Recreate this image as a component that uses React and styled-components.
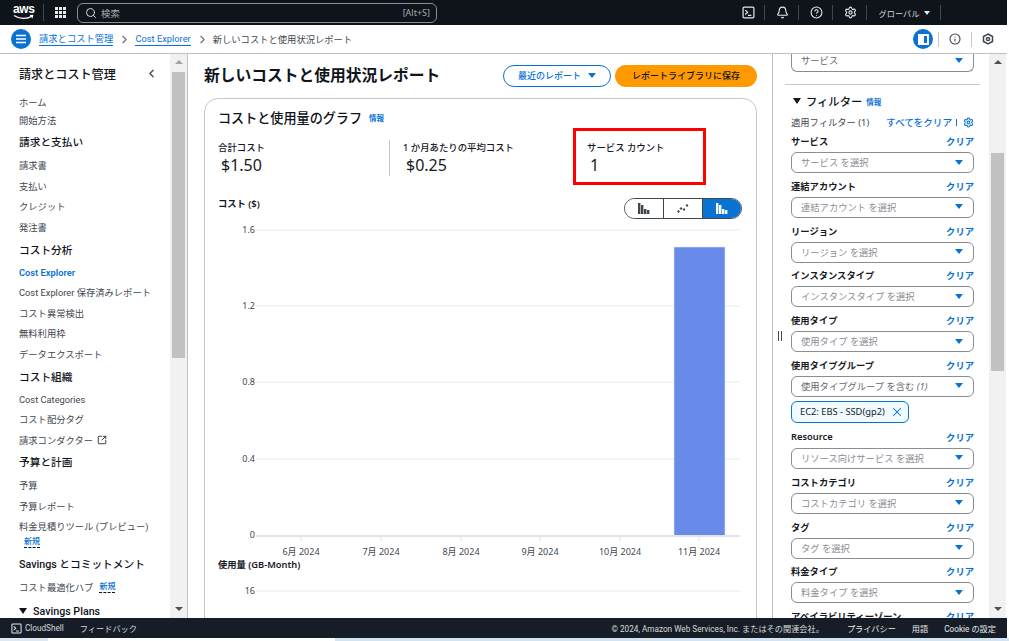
import React from 'react';
import styled, { createGlobalStyle } from 'styled-components';
import { Search, Bell, CircleHelp, Settings, Info, X, SquareArrowOutUpRight, ChevronLeft, ChevronRight } from 'lucide-react';

const narrowFont = 'Roboto, "Noto Sans CJK JP", sans-serif';

const GlobalStyle = createGlobalStyle`
    html, body {
        margin: 0;
        padding: 0;
        overflow: hidden;
        background: #fff;
    }
    * {
        box-sizing: border-box;
    }
    body {
        font-family: "Noto Sans", "Noto Sans CJK JP", "Liberation Sans", sans-serif;
        color: #16191f;
    }
`;

const Page = styled.div`
    width: 1009px;
    height: 641px;
    display: flex;
    flex-direction: column;
    overflow: hidden;
`;

const TopBar = styled.div`
    width: 1007px;
    height: 25px;
    flex: none;
    background: #0f141a;
    display: flex;
    align-items: center;
    color: #fff;
    padding-left: 13px;
`;

const AwsLogo = styled.div`
    width: 21px;
    height: 19px;
    position: relative;
    font-family: "Liberation Sans", sans-serif;
    font-size: 12px;
    font-weight: bold;
    line-height: 13px;
    letter-spacing: -0.4px;
    color: #fff;
`;

const Smile = styled.svg`
    position: absolute;
    left: 0;
    top: 11px;
`;

const LogoDivider = styled.div`
    width: 1px;
    height: 17px;
    background: #414750;
    margin: 0 11px 0 9px;
`;

const GridIcon = styled.svg`
    flex: none;
    margin-right: 11px;
`;

const SearchBox = styled.div`
    width: 360px;
    height: 20px;
    border: 1px solid #8c8f94;
    border-radius: 6px;
    display: flex;
    align-items: center;
    gap: 4px;
    padding: 0 6px 0 7px;
    font-size: 9.4px;
    color: #a7abb1;
`;

const Hint = styled.span`
    margin-left: auto;
    font-size: 9px;
`;

const TopRight = styled.div`
    margin-left: auto;
    display: flex;
    align-items: center;
    padding-right: 66px;
`;

const TopItem = styled.div`
    height: 15px;
    width: ${(p) => p.$width || 34}px;
    border-right: 1px solid #414750;
    padding-left: 2px;
    display: flex;
    align-items: center;
    justify-content: center;
    gap: 5px;
    font-size: 8.2px;
    color: #d5dbdb;
`;

const SmallCaret = styled.span`
    width: 0;
    height: 0;
    border-left: 3px solid transparent;
    border-right: 3px solid transparent;
    border-top: 4px solid #e8eaec;
`;

const CrumbBar = styled.div`
    width: 1007px;
    height: 29px;
    flex: none;
    background: #fff;
    border-bottom: 1px solid #bfc0c2;
    display: flex;
    align-items: center;
    padding-left: 11px;
    font-family: ${narrowFont};
    font-size: 9.3px;
`;

const MenuButton = styled.div`
    width: 20px;
    height: 20px;
    border-radius: 50%;
    background: #0972d3;
    flex: none;
    margin-right: ${(p) => p.$mr}px;
    display: flex;
    align-items: center;
    justify-content: center;
`;

const CrumbLink = styled.span`
    color: #0972d3;
    border-bottom: 1px solid #0972d3;
    line-height: 12px;
`;

const CrumbSep = styled.span`
    display: flex;
    color: #687078;
    margin: 0 4px 0 5px;
`;

const CrumbText = styled.span`
    color: #414750;
`;

const CrumbTools = styled.div`
    margin-left: auto;
    display: flex;
    align-items: center;
    padding-right: 3px;
`;

const ToolItem = styled.div`
    width: 33px;
    height: 15px;
    display: flex;
    align-items: center;
    justify-content: center;
    color: #414750;
    border-left: 1px solid #c6c6cd;
`;

const Body = styled.div`
    flex: 1;
    min-height: 0;
    width: 1007px;
    display: flex;
    overflow: hidden;
`;

const Side = styled.nav`
    width: 170px;
    flex: none;
    padding: 11px 0 0 19px;
    overflow: hidden;
    font-family: ${narrowFont};
    font-size: 9.3px;
`;

const SideTitle = styled.div`
    display: flex;
    align-items: center;
    justify-content: space-between;
    height: 18px;
    padding: 0 12px 2px 0;
    font-size: 12.1px;
    font-weight: 500;
    color: #0f141a;
    margin-bottom: 10px;
`;

const NavGroup = styled.div`
    height: ${(p) => p.$h || 22}px;
    display: flex;
    align-items: center;
    padding-bottom: 1px;
    font-size: 10.7px;
    font-weight: 500;
    color: #0f141a;
    white-space: nowrap;
    gap: 5px;
`;

const NavItem = styled.div`
    height: ${(p) => p.$h || 20.6}px;
    display: flex;
    align-items: center;
    gap: 4px;
    white-space: nowrap;
    color: ${(p) => (p.$active ? '#0972d3' : '#414750')};
    font-weight: ${(p) => (p.$active ? 600 : 400)};
`;

const NewTag = styled.span`
    color: #0972d3;
    font-size: 8px;
    font-weight: 500;
    line-height: 11px;
    border-bottom: 1px dashed #0f141a;
    margin-left: ${(p) => p.$indent || 0}px;
    margin-bottom: ${(p) => p.$lift || 0}px;
`;

const Scrollbar = styled.div`
    width: 17px;
    flex: none;
    background: #f1f1f1;
    display: flex;
    flex-direction: column;
    align-items: center;
    padding: 6px 0 7px;
`;

const ArrowUp = styled.span`
    flex: none;
    width: 0;
    height: 0;
    border-left: 4px solid transparent;
    border-right: 4px solid transparent;
    border-bottom: 4px solid ${(p) => p.$color || '#a3a3a3'};
`;

const ArrowDown = styled.span`
    flex: none;
    width: 0;
    height: 0;
    margin-top: auto;
    border-left: 4px solid transparent;
    border-right: 4px solid transparent;
    border-top: 4px solid #505050;
`;

const Thumb = styled.div`
    width: 13px;
    height: ${(p) => p.$h}px;
    margin-top: ${(p) => p.$top}px;
    background: #c1c1c1;
    flex: none;
`;

const Main = styled.main`
    width: 586px;
    flex: none;
    border-left: 1px solid #bfc0c2;
    border-right: 1px solid #bfc0c2;
    padding: 9px 15px 0 16px;
    overflow: hidden;
`;

const Header = styled.div`
    display: flex;
    align-items: center;
    height: 25px;
    margin-bottom: 10px;
`;

const PageTitle = styled.h1`
    margin: 0 auto 2px 0;
    font-size: 15.75px;
    font-weight: 600;
    color: #0f141a;
`;

const OutlineButton = styled.div`
    width: 108px;
    height: 22px;
    border: 1px solid #0972d3;
    border-radius: 11px;
    display: flex;
    align-items: center;
    justify-content: center;
    gap: 7px;
    color: #0972d3;
    font-size: 9px;
    font-weight: 500;
    margin-right: 4px;
`;

const PrimaryButton = styled.div`
    width: 142px;
    height: 22px;
    border-radius: 11px;
    background: #ff9900;
    display: flex;
    align-items: center;
    justify-content: center;
    color: #0f141a;
    font-size: 9px;
    font-weight: 500;
`;

const Card = styled.section`
    position: relative;
    width: 553px;
    height: 560px;
    border: 1px solid #c6c6cd;
    border-radius: 14px;
    padding: 9px 13px 0;
`;

const CardTitle = styled.div`
    display: flex;
    align-items: center;
    gap: 7px;
    height: 18px;
    font-size: 13.1px;
    font-weight: 500;
    color: #0f141a;
    margin-bottom: 14px;
`;

const InfoLink = styled.span`
    color: #0972d3;
    font-size: 7.5px;
    font-weight: 600;
`;

const Metrics = styled.div`
    display: grid;
    grid-template-columns: 171px 184px 1fr;
    height: 36px;
    margin-bottom: 22px;
`;

const Metric = styled.div`
    padding-left: ${(p) => (p.$first ? 0 : 13)}px;
    border-left: ${(p) => (p.$first ? 'none' : '1px solid #c6c6cd')};
`;

const MetricLabel = styled.div`
    font-size: 9.4px;
    font-weight: 500;
    line-height: 16px;
    color: #16191f;
`;

const MetricValue = styled.div`
    font-size: 16px;
    line-height: 19px;
    color: #16191f;
    padding-left: 3px;
`;

const Highlight = styled.div`
    position: absolute;
    left: 368px;
    top: 29px;
    width: 133px;
    height: 57px;
    border: 3px solid #ff0000;
`;

const ChartHead = styled.div`
    display: flex;
    justify-content: space-between;
    height: 26px;
`;

const ChartLabel = styled.div`
    font-size: 9.3px;
    font-weight: 600;
    line-height: 12px;
    color: #16191f;
`;

const Segments = styled.div`
    display: flex;
    width: 118px;
    height: 21px;
    border: 1px solid #414750;
    border-radius: 11px;
    overflow: hidden;
    margin-right: 1px;
`;

const Segment = styled.div`
    flex: 1;
    display: flex;
    align-items: center;
    justify-content: center;
    background: ${(p) => (p.$on ? '#0972d3' : '#fff')};
    border-left: ${(p) => (p.$first ? 'none' : '1px solid #414750')};
`;

const Chart = styled.svg`
    display: block;
    font-family: "Noto Sans", "Noto Sans CJK JP", sans-serif;
    font-size: 9px;
`;

const Splitter = styled.div`
    width: 13px;
    flex: none;
    display: flex;
    justify-content: center;
    gap: 2px;
    align-items: center;
    margin-right: -1px;
`;

const SplitBar = styled.span`
    width: 1px;
    height: 10px;
    background: #414750;
`;

const Panel = styled.aside`
    width: 204px;
    flex: none;
    overflow: hidden;
    padding-left: 6px;
`;

const FieldsWrap = styled.div`
    width: 183px;
`;

const TopSelect = styled.div`
    width: 183px;
    height: 18px;
    border: 1px solid #8c8c94;
    border-top: none;
    border-radius: 0 0 6px 6px;
    display: flex;
    align-items: center;
    justify-content: space-between;
    padding: 0 10px 5px 9px;
    font-size: 9.3px;
    color: #656871;
`;

const Rule = styled.div`
    width: 195px;
    height: 1px;
    background: #c6c6cd;
    margin: 12px 0 0 -6px;
`;

const FilterHead = styled.div`
    display: flex;
    align-items: center;
    gap: 4px;
    height: 18px;
    margin-top: 7px;
    padding-left: 2px;
    font-size: 11.3px;
    font-weight: 500;
    color: #0f141a;
`;

const BlackCaret = styled.span`
    width: 0;
    height: 0;
    border-left: 4px solid transparent;
    border-right: 4px solid transparent;
    border-top: 6px solid #0f141a;
    margin-right: 1px;
`;

const AppliedRow = styled.div`
    display: flex;
    align-items: center;
    height: 14px;
    margin: 5px 0 3px;
    font-size: 9.3px;
    color: #414750;
    white-space: nowrap;
`;

const ClearAll = styled.span`
    margin-left: auto;
    color: #0972d3;
    font-size: 9.6px;
    font-weight: 500;
    display: flex;
    align-items: center;
    gap: 2px;
`;

const ClearSep = styled.span`
    width: 1px;
    height: 7px;
    background: #0972d3;
    margin: 0 4px 0 2px;
`;

const Field = styled.div`
    margin-bottom: ${(p) => p.$gap ?? 3.8}px;
`;

const FieldHead = styled.div`
    display: flex;
    align-items: center;
    justify-content: space-between;
    height: 18px;
    margin-bottom: 2px;
    font-size: 9.3px;
    font-weight: 600;
    color: #16191f;
`;

const ClearLink = styled.span`
    color: #0972d3;
    font-weight: 600;
`;

const Select = styled.div`
    height: 21px;
    border: 1px solid #8c8c94;
    border-radius: 6px;
    display: flex;
    align-items: center;
    justify-content: space-between;
    padding: 0 10px 1px 9px;
    font-size: 9.3px;
    color: #8c8c94;
`;

const SelectCount = styled.em`
    font-style: italic;
`;

const SelectValue = styled.span`
    color: #656871;
`;

const BlueCaret = styled.span`
    width: 0;
    height: 0;
    border-left: 4px solid transparent;
    border-right: 4px solid transparent;
    border-top: 5px solid #0972d3;
`;

const Chip = styled.div`
    width: 118px;
    height: 22px;
    margin: 4px 0 5px;
    border: 1px solid #0972d3;
    border-radius: 6px;
    background: #f0fbff;
    display: flex;
    align-items: center;
    justify-content: space-between;
    padding: 0 4px 0 8px;
    font-size: 9.3px;
    color: #16191f;
`;

const Footer = styled.footer`
    width: 1007px;
    height: 20px;
    flex: none;
    background: #161d26;
    display: flex;
    align-items: center;
    padding-left: 11px;
    color: #d5dbdb;
    font-family: ${narrowFont};
    font-size: 8.2px;
`;

const ShellItem = styled.span`
    display: flex;
    align-items: center;
    gap: 3px;
    margin-right: 16px;
`;

const FooterRight = styled.div`
    margin-left: auto;
    display: flex;
    align-items: center;
    padding-right: 11px;
`;

const Copyright = styled.span`
    margin-right: 23px;
`;

const FooterLink = styled.span`
    margin-left: ${(p) => p.$gap || 0}px;
    color: #e8eaec;
`;

const BottomStrip = styled.div`
    height: 3px;
    flex: none;
    background: linear-gradient(to right, #dde9f2 0, #dde9f2 48px, #fff 48px, #fff 335px, #d3e4f0 335px, #d3e4f0 1009px);
`;

function TerminalIcon({ color = '#e8eaec', size = 13 }) {
    return (
        <svg width={size} height={size} viewBox="0 0 12 12" fill="none" stroke={color} strokeWidth="1.1">
            <rect x="1" y="1" width="10" height="10" rx="1" />
            <path d="M3 3.8 5.2 5.8 3 7.8M5.5 8.6H8.6" />
        </svg>
    );
}

function ChartTypeIcon({ kind, color }) {
    if (kind === 'line') {
        return (
            <svg width="12" height="10" viewBox="0 0 12 10" fill={color}>
                <path d="M1.5 6 3 7.5 1.5 9 0 7.5Z" />
                <path d="M4 3 5.5 4.5 4 6 2.5 4.5Z" />
                <path d="M7 4 8.5 5.5 7 7 5.5 5.5Z" />
                <path d="M10 0 11.5 1.5 10 3 8.5 1.5Z" />
            </svg>
        );
    }
    return (
        <svg width="12" height="11" viewBox="0 0 12 11" fill={color}>
            <rect x="0" y="0" width="2.4" height="11" />
            <rect x="3" y="2" width="2.4" height="9" />
            <rect x="6" y="6" width="2.4" height="5" />
            <rect x="9" y="7" width="2.4" height="4" />
        </svg>
    );
}

const ticks = [
    { x: 83, label: '6月 2024' },
    { x: 163, label: '7月 2024' },
    { x: 243, label: '8月 2024' },
    { x: 322, label: '9月 2024' },
    { x: 402, label: '10月 2024' },
    { x: 481, label: '11月 2024' },
];

const levels = [
    { y: 6, label: '1.6' },
    { y: 82, label: '1.2' },
    { y: 158, label: '0.8' },
    { y: 235, label: '0.4' },
];

const filters = [
    { name: 'サービス', value: 'サービス を選択' },
    { name: '連結アカウント', value: '連結アカウント を選択' },
    { name: 'リージョン', value: 'リージョン を選択' },
    { name: 'インスタンスタイプ', value: 'インスタンスタイプ を選択' },
    { name: '使用タイプ', value: '使用タイプ を選択' },
];

const filtersAfter = [
    { name: 'Resource', value: 'リソース向けサービス を選択' },
    { name: 'コストカテゴリ', value: 'コストカテゴリ を選択' },
    { name: 'タグ', value: 'タグ を選択' },
    { name: '料金タイプ', value: '料金タイプ を選択' },
];

function FilterField({ name, value }) {
    return (
        <Field>
            <FieldHead>
                <span>{name}</span>
                <ClearLink>クリア</ClearLink>
            </FieldHead>
            <Select>
                <span>{value}</span>
                <BlueCaret />
            </Select>
        </Field>
    );
}

function App() {
    return (
        <Page>
            <GlobalStyle />
            <TopBar>
                <AwsLogo>
                    aws
                    <Smile width="21" height="7" viewBox="0 0 21 7" fill="none" stroke="#fff" strokeWidth="1.2">
                        <path d="M1 1.5C6 5 14 5.5 19 2M17 1.6 19.6 1.4 19 4" />
                    </Smile>
                </AwsLogo>
                <LogoDivider />
                <GridIcon width="11" height="11" viewBox="0 0 11 11" fill="#e8eaec">
                    {[0, 4, 8].map((y) => [0, 4, 8].map((x) => (
                        <rect key={`${x}-${y}`} x={x} y={y} width="3" height="3" />
                    )))}
                </GridIcon>
                <SearchBox>
                    <Search size={12} color="#d5dbdb" strokeWidth={2} />
                    <span>検索</span>
                    <Hint>[Alt+S]</Hint>
                </SearchBox>
                <TopRight>
                    <TopItem><TerminalIcon /></TopItem>
                    <TopItem><Bell size={13} color="#e8eaec" /></TopItem>
                    <TopItem><CircleHelp size={13} color="#e8eaec" /></TopItem>
                    <TopItem><Settings size={13} color="#e8eaec" /></TopItem>
                    <TopItem $width={74}>グローバル <SmallCaret /></TopItem>
                </TopRight>
            </TopBar>

            <CrumbBar>
                <MenuButton $mr={8}>
                    <svg width="12" height="10" viewBox="0 0 12 10" stroke="#fff" strokeWidth="1.5">
                        <path d="M1 1.5H11M1 5H11M1 8.5H11" />
                    </svg>
                </MenuButton>
                <CrumbLink>請求とコスト管理</CrumbLink>
                <CrumbSep><ChevronRight size={13} /></CrumbSep>
                <CrumbLink>Cost Explorer</CrumbLink>
                <CrumbSep><ChevronRight size={13} /></CrumbSep>
                <CrumbText>新しいコストと使用状況レポート</CrumbText>
                <CrumbTools>
                    <MenuButton $mr={5}>
                        <svg width="11" height="11" viewBox="0 0 11 11" fill="#fff">
                            <path d="M0 0H11V11H0ZM6 2V9H9V2Z" fillRule="evenodd" />
                        </svg>
                    </MenuButton>
                    <ToolItem><Info size={12} strokeWidth={2.2} /></ToolItem>
                    <ToolItem>
                        <svg width="12" height="12" viewBox="0 0 12 12" fill="none" stroke="#414750" strokeWidth="1.5">
                            <path d="M6 1 10.5 3.5V8.5L6 11 1.5 8.5V3.5Z" />
                            <circle cx="6" cy="6" r="1.6" />
                        </svg>
                    </ToolItem>
                </CrumbTools>
            </CrumbBar>

            <Body>
                <Side>
                    <SideTitle>請求とコスト管理 <ChevronLeft size={13} strokeWidth={2.4} color="#414750" /></SideTitle>
                    <NavItem $h={18}>ホーム</NavItem>
                    <NavItem $h={18}>開始方法</NavItem>
                    <NavGroup $h={26}>請求と支払い</NavGroup>
                    <NavItem>請求書</NavItem>
                    <NavItem>支払い</NavItem>
                    <NavItem>クレジット</NavItem>
                    <NavItem>発注書</NavItem>
                    <NavGroup $h={25}>コスト分析</NavGroup>
                    <NavItem $active $h={19.6}>Cost Explorer</NavItem>
                    <NavItem>Cost Explorer 保存済みレポート</NavItem>
                    <NavItem>コスト異常検出</NavItem>
                    <NavItem>無料利用枠</NavItem>
                    <NavItem>データエクスポート</NavItem>
                    <NavGroup $h={25}>コスト組織</NavGroup>
                    <NavItem $h={20}>Cost Categories</NavItem>
                    <NavItem $h={20}>コスト配分タグ</NavItem>
                    <NavItem>請求コンダクター <SquareArrowOutUpRight size={10} strokeWidth={2} color="#16191f" /></NavItem>
                    <NavGroup $h={25}>予算と計画</NavGroup>
                    <NavItem>予算</NavItem>
                    <NavItem>予算レポート</NavItem>
                    <NavItem>料金見積りツール (プレビュー)</NavItem>
                    <NavItem $h={14}><NewTag $indent={5} $lift={4}>新規</NewTag></NavItem>
                    <NavGroup $h={26}>Savings とコミットメント</NavGroup>
                    <NavItem $h={20}>コスト最適化ハブ <NewTag $indent={2}>新規</NewTag></NavItem>
                    <NavGroup $h={30}><BlackCaret />Savings Plans</NavGroup>
                </Side>
                <Scrollbar>
                    <ArrowUp />
                    <Thumb $top={8} $h={286} />
                    <ArrowDown />
                </Scrollbar>

                <Main>
                    <Header>
                        <PageTitle>新しいコストと使用状況レポート</PageTitle>
                        <OutlineButton>最近のレポート <BlueCaret /></OutlineButton>
                        <PrimaryButton>レポートライブラリに保存</PrimaryButton>
                    </Header>
                    <Card>
                        <CardTitle>コストと使用量のグラフ <InfoLink>情報</InfoLink></CardTitle>
                        <Metrics>
                            <Metric $first>
                                <MetricLabel>合計コスト</MetricLabel>
                                <MetricValue>$1.50</MetricValue>
                            </Metric>
                            <Metric>
                                <MetricLabel>1 か月あたりの平均コスト</MetricLabel>
                                <MetricValue>$0.25</MetricValue>
                            </Metric>
                            <Metric>
                                <MetricLabel>サービス カウント</MetricLabel>
                                <MetricValue>1</MetricValue>
                            </Metric>
                        </Metrics>
                        <Highlight />
                        <ChartHead>
                            <ChartLabel>コスト ($)</ChartLabel>
                            <Segments>
                                <Segment $first><ChartTypeIcon color="#414750" /></Segment>
                                <Segment><ChartTypeIcon kind="line" color="#414750" /></Segment>
                                <Segment $on><ChartTypeIcon color="#fff" /></Segment>
                            </Segments>
                        </ChartHead>
                        <Chart width="525" height="335" viewBox="0 0 525 335">
                            {levels.map((l) => (
                                <g key={l.label}>
                                    <line x1="38" x2="522" y1={l.y} y2={l.y} stroke="#e9ebed" />
                                    <text x="37" y={l.y + 3} textAnchor="end" fill="#414750">{l.label}</text>
                                </g>
                            ))}
                            <rect x="456" y="23" width="51" height="289" fill="#688ae8" stroke="#dfe4f7" strokeWidth="0.6" />
                            <line x1="38" x2="522" y1="312" y2="312" stroke="#e1e2ea" strokeWidth="2" />
                            <text x="37" y="314" textAnchor="end" fill="#414750">0</text>
                            {ticks.map((t) => (
                                <g key={t.label}>
                                    <line x1={t.x} x2={t.x} y1="313" y2="317" stroke="#e1e2ea" />
                                    <text x={t.x} y="331" textAnchor="middle" fill="#414750">{t.label}</text>
                                </g>
                            ))}
                        </Chart>
                        <ChartLabel>使用量 (GB-Month)</ChartLabel>
                        <Chart width="525" height="40" viewBox="0 0 525 40">
                            <line x1="38" x2="522" y1="20" y2="20" stroke="#e9ebed" />
                            <text x="37" y="23" textAnchor="end" fill="#414750">16</text>
                        </Chart>
                    </Card>
                </Main>

                <Splitter>
                    <SplitBar />
                    <SplitBar />
                </Splitter>
                <Panel>
                    <TopSelect>
                        <span>サービス</span>
                        <BlueCaret />
                    </TopSelect>
                    <Rule />
                    <FieldsWrap>
                        <FilterHead><BlackCaret />フィルター <InfoLink>情報</InfoLink></FilterHead>
                        <AppliedRow>
                            適用フィルター (1)
                            <ClearAll>すべてをクリア<ClearSep /><Settings size={11} color="#0972d3" strokeWidth={2.2} /></ClearAll>
                        </AppliedRow>
                        {filters.map((f) => <FilterField key={f.name} {...f} />)}
                        <Field $gap={0}>
                            <FieldHead>
                                <span>使用タイプグループ</span>
                                <ClearLink>クリア</ClearLink>
                            </FieldHead>
                            <Select>
                                <SelectValue>使用タイプグループ を含む <SelectCount>(1)</SelectCount></SelectValue>
                                <BlueCaret />
                            </Select>
                        </Field>
                        <Chip>
                            EC2: EBS - SSD(gp2)
                            <X size={14} color="#0972d3" strokeWidth={1.8} />
                        </Chip>
                        {filtersAfter.map((f) => <FilterField key={f.name} {...f} />)}
                        <FieldHead>
                            <span>アベイラビリティーゾーン</span>
                            <ClearLink>クリア</ClearLink>
                        </FieldHead>
                    </FieldsWrap>
                </Panel>
                <Scrollbar>
                    <ArrowUp $color="#505050" />
                    <Thumb $top={89} $h={218} />
                    <ArrowDown />
                </Scrollbar>
            </Body>

            <Footer>
                <ShellItem><TerminalIcon size={11} />CloudShell</ShellItem>
                <span>フィードバック</span>
                <FooterRight>
                    <Copyright>© 2024, Amazon Web Services, Inc. またはその関連会社。</Copyright>
                    <FooterLink>プライバシー</FooterLink>
                    <FooterLink $gap={16}>用語</FooterLink>
                    <FooterLink $gap={16}>Cookie の設定</FooterLink>
                </FooterRight>
            </Footer>
            <BottomStrip />
        </Page>
    );
}

export default App;
